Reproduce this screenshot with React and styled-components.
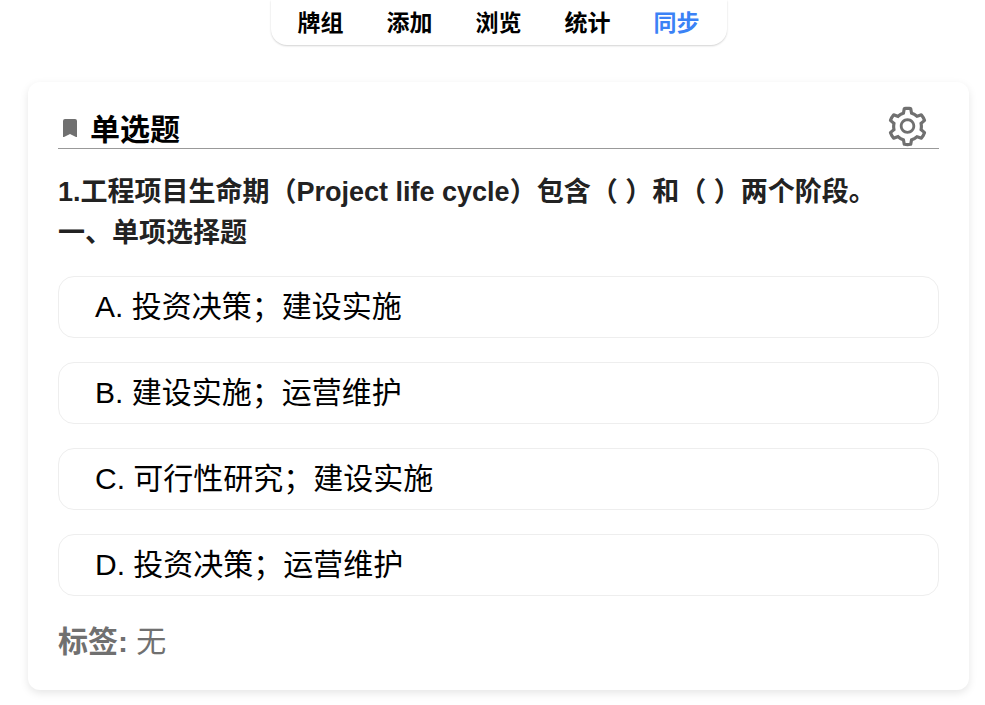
import React, { useState } from "react";
import styled, { createGlobalStyle } from "styled-components";
import { AiOutlineSetting } from "react-icons/ai";

const GlobalStyle = createGlobalStyle`
  body {
    margin: 0;
    background: white;
    color: black;
    font-family: "Liberation Sans", "Noto Sans CJK SC", sans-serif;
  }
`;

// Styled Components
const Page = styled.div`
  padding: 0 16px 15px 28px;
`;

const Toolbar = styled.nav`
  display: flex;
  justify-content: center;
  gap: 43px;
  width: fit-content;
  margin: 0 auto;
  padding: 6px 27px 5px;
  border-radius: 0 0 16px 16px;
  box-shadow: 0 1px 2px rgba(0, 0, 0, 0.18);
`;

const ToolbarLink = styled.a`
  font-size: 23px;
  line-height: 34px;
  font-weight: bold;
  text-decoration: none;
  color: ${(props) => (props.$active ? "#3b82f6" : "black")};
`;

const Card = styled.main`
  margin-top: 37px;
  padding: 22px 30px 27px;
  border-radius: 12px;
  box-shadow: 0 3px 8px rgba(0, 0, 0, 0.1);
`;

const CardHeader = styled.header`
  display: flex;
  justify-content: space-between;
  border-bottom: 1px solid #999;
  padding: 0 9px 0 5px;
`;

const Title = styled.h1`
  display: flex;
  align-items: center;
  gap: 13px;
  margin: 0;
  padding-top: 8px;
  font-size: 30px;
  line-height: 36px;
`;

const BookmarkIcon = styled.svg`
  width: 14px;
  height: 22px;
  fill: #707070;
`;

const SettingsButton = styled.button`
  display: flex;
  margin-bottom: -1px;
  padding: 0;
  border: none;
  background: none;
  color: #707070;
  font-size: 45px;
  cursor: pointer;
`;

const Question = styled.p`
  margin: 23px 0 22px;
  font-size: 27px;
  line-height: 41px;
  font-weight: bold;
  color: #222;
`;

const Options = styled.div`
  display: flex;
  flex-direction: column;
  gap: 24px;
`;

const Option = styled.button`
  padding: 0 36px;
  border: 1px solid #eee;
  border-radius: 16px;
  background: white;
  color: black;
  font-family: inherit;
  font-size: 30px;
  font-weight: ${(props) => (props.$selected ? "bold" : "normal")};
  line-height: 60px;
  text-align: left;
  cursor: pointer;
`;

const Tags = styled.p`
  margin: 25px 0 0;
  font-size: 30px;
  line-height: 42px;
  color: #707070;
`;

const TagsLabel = styled.span`
  font-weight: bold;
`;

const links = ["牌组", "添加", "浏览", "统计", "同步"];

const options = [
  "A. 投资决策；建设实施",
  "B. 建设实施；运营维护",
  "C. 可行性研究；建设实施",
  "D. 投资决策；运营维护",
];

export default function App() {
  const [selected, setSelected] = useState(null);

  return (
    <Page>
      <GlobalStyle />
      <Toolbar>
        {links.map((link) => (
          <ToolbarLink key={link} href="#" $active={link === "同步"}>
            {link}
          </ToolbarLink>
        ))}
      </Toolbar>
      <Card>
        <CardHeader>
          <Title>
            <BookmarkIcon viewBox="0 0 14 22" aria-hidden="true">
              <path d="M2 0h10a2 2 0 0 1 2 2v16h-1l-6-3-6 3H0V2a2 2 0 0 1 2-2z" />
            </BookmarkIcon>
            单选题
          </Title>
          <SettingsButton type="button" aria-label="设置">
            <AiOutlineSetting />
          </SettingsButton>
        </CardHeader>
        <Question>
          1.工程项目生命期（Project life cycle）包含（ ）和（ ）两个阶段。
          <br />
          一、单项选择题
        </Question>
        <Options>
          {options.map((option) => (
            <Option
              key={option}
              type="button"
              $selected={selected === option}
              onClick={() => setSelected(option)}
            >
              {option}
            </Option>
          ))}
        </Options>
        <Tags>
          <TagsLabel>标签:</TagsLabel> 无
        </Tags>
      </Card>
    </Page>
  );
}
